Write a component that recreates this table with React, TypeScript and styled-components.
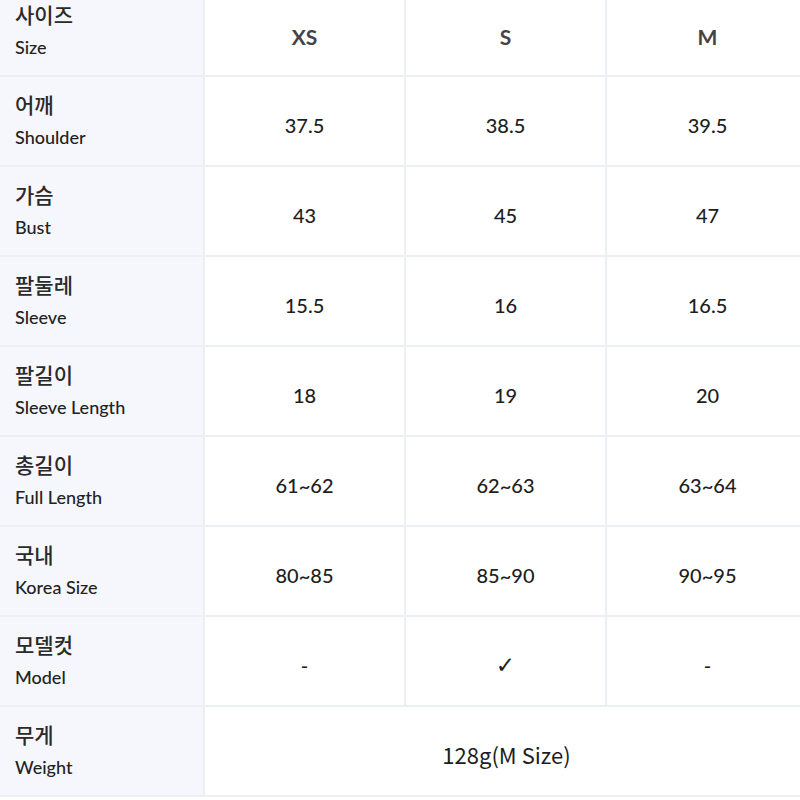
import React from "react";
import styled, { createGlobalStyle } from "styled-components";

const Global = createGlobalStyle`
  html, body { margin: 0; padding: 0; background: #fff; overflow: hidden; }
  body { font-family: Lato, "Noto Sans CJK KR", sans-serif; color: #333; }
`;

const Page = styled.div`
  width: 800px;
  height: 800px;
  overflow: hidden;
`;

const Table = styled.div`
  width: 808px;
  margin-top: -13px;
  display: grid;
  grid-template-columns: 205px 201px 201px 201px;
  grid-auto-rows: 90px;
`;

const LabelCell = styled.div`
  background: #f5f7fc;
  border-bottom: 2px solid #eceff4;
  border-right: 2px solid #eceff4;
  display: flex;
  flex-direction: column;
  justify-content: center;
  gap: 7px;
  padding: 0 0 4px 15px;
  box-sizing: border-box;
`;

const Ko = styled.div`
  font-family: "Noto Sans CJK KR", sans-serif;
  font-size: 21px;
  line-height: 28px;
  font-weight: 500;
  color: #2a2a2a;
`;

const En = styled.div`
  font-family: Lato, sans-serif;
  font-size: 18px;
  line-height: 24px;
  font-weight: 500;
  color: #222;
`;

const ValueCell = styled.div<{ $span?: number; $last?: boolean; $head?: boolean; $wide?: boolean; $mark?: boolean }>`
  grid-column: span ${(p) => p.$span ?? 1};
  border-bottom: 2px solid #eceff4;
  border-right: ${(p) => (p.$last ? "none" : "2px solid #eceff4")};
  box-sizing: border-box;
  display: flex;
  align-items: center;
  justify-content: center;
  padding-top: ${(p) => (p.$head ? "10px" : p.$wide ? "6px" : "8px")};
  font-family: ${(p) =>
    p.$wide ? `"Noto Sans CJK KR", sans-serif` : p.$mark ? `"DejaVu Sans", sans-serif` : "Lato, sans-serif"};
  font-size: ${(p) => (p.$head ? "21px" : p.$wide ? "22px" : p.$mark ? "23px" : "20px")};
  font-weight: ${(p) => (p.$head ? 700 : p.$mark ? 700 : p.$wide ? 400 : 500)};
  color: ${(p) => (p.$head ? "#444" : "#1e1e1e")};
`;

const rows: { ko: string; en: string; v: string[] }[] = [
  { ko: "어깨", en: "Shoulder", v: ["37.5", "38.5", "39.5"] },
  { ko: "가슴", en: "Bust", v: ["43", "45", "47"] },
  { ko: "팔둘레", en: "Sleeve", v: ["15.5", "16", "16.5"] },
  { ko: "팔길이", en: "Sleeve Length", v: ["18", "19", "20"] },
  { ko: "총길이", en: "Full Length", v: ["61~62", "62~63", "63~64"] },
  { ko: "국내", en: "Korea Size", v: ["80~85", "85~90", "90~95"] },
  { ko: "모델컷", en: "Model", v: ["-", "✓", "-"] },
];

export default function App() {
  return (
    <Page>
      <Global />
      <Table>
        <LabelCell>
          <Ko>사이즈</Ko>
          <En>Size</En>
        </LabelCell>
        {["XS", "S", "M"].map((s, i) => (
          <ValueCell key={s} $head $last={i === 2}>
            {s}
          </ValueCell>
        ))}
        {rows.map((r) => (
          <React.Fragment key={r.ko}>
            <LabelCell>
              <Ko>{r.ko}</Ko>
              <En>{r.en}</En>
            </LabelCell>
            {r.v.map((v, i) => (
              <ValueCell key={i} $last={i === 2} $mark={v === "✓"}>
                {v}
              </ValueCell>
            ))}
          </React.Fragment>
        ))}
        <LabelCell>
          <Ko>무게</Ko>
          <En>Weight</En>
        </LabelCell>
        <ValueCell $span={3} $last $wide>
          128g(M Size)
        </ValueCell>
      </Table>
    </Page>
  );
}
